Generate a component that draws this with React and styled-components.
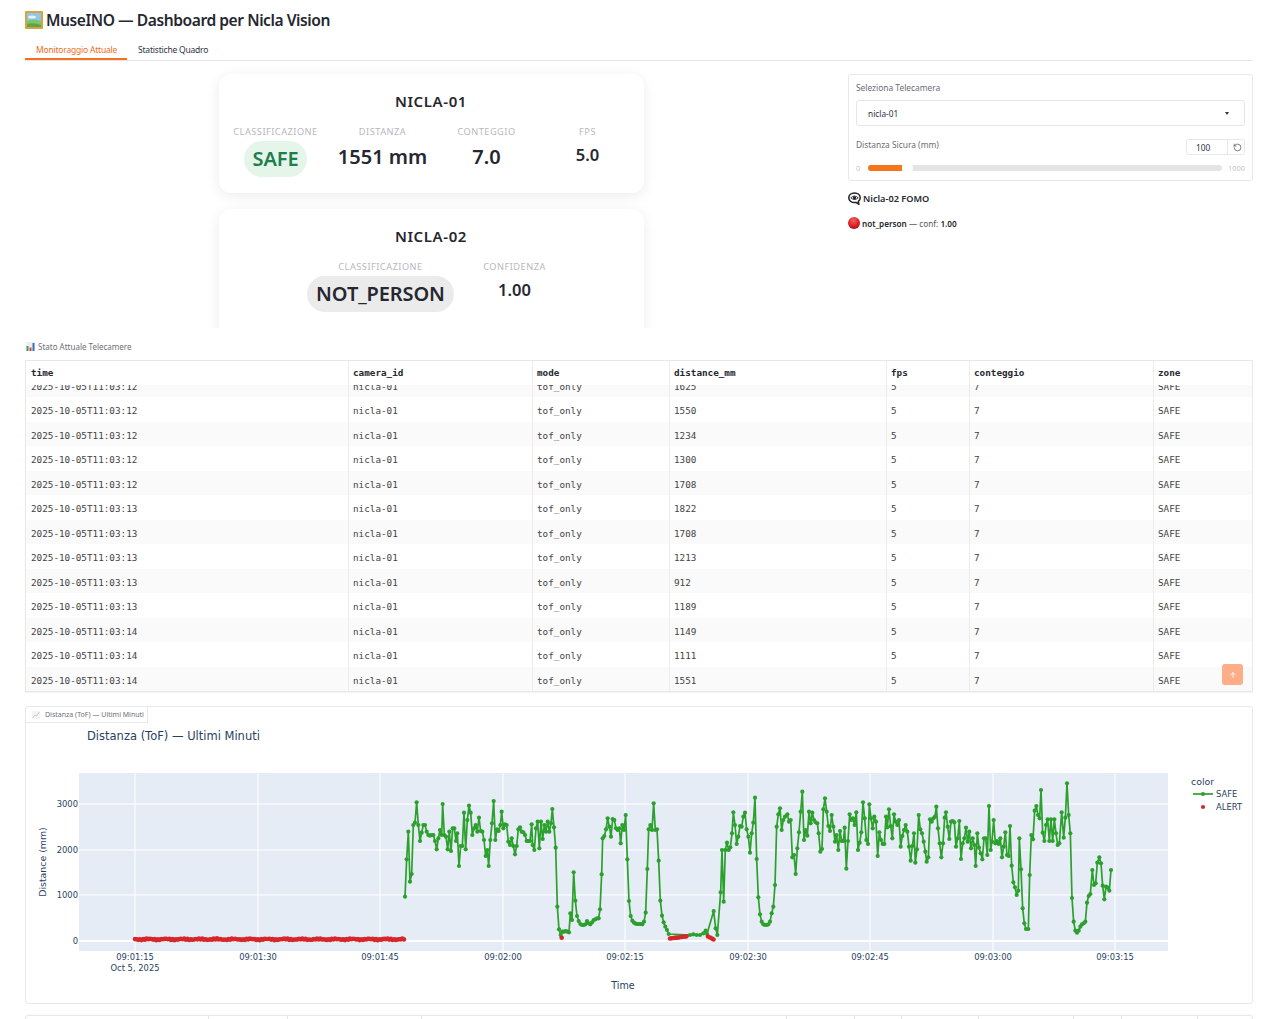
import React from 'react';
import styled, { createGlobalStyle } from 'styled-components';
import { RotateCcw, ArrowUp } from 'lucide-react';

const GlobalStyle = createGlobalStyle`
    html, body {
        margin: 0;
        height: 1019px;
        overflow: hidden;
        background: #fff;
    }
    body {
        font-family: "Noto Sans", "Open Sans", sans-serif;
        color: #31333f;
    }
`;

const Page = styled.div`
    padding: 0 27px 0 25px;
`;

const Title = styled.h1`
    display: flex;
    align-items: center;
    gap: 3px;
    margin: 0;
    height: 40px;
    font-size: 15.6px;
    font-weight: 600;
    letter-spacing: -0.45px;
    color: #262730;
`;

const Tabs = styled.div`
    display: flex;
    height: 20px;
    border-bottom: 1px solid #e6e6e6;
    box-sizing: content-box;
`;

const Tab = styled.div`
    width: ${props => props.width}px;
    height: 20px;
    box-sizing: border-box;
    padding-left: 11px;
    font-size: 8.5px;
    letter-spacing: -0.2px;
    line-height: 19px;
    white-space: nowrap;
    color: ${props => (props.active ? '#f26b21' : '#31333f')};
    border-bottom: ${props => (props.active ? '2px solid #f37021' : 'none')};
`;

const Main = styled.div`
    display: grid;
    grid-template-columns: 812px 405px;
    column-gap: 11px;
    height: 269px;
    margin-top: -2px;
`;

const Left = styled.div`
    display: flex;
    flex-direction: column;
    gap: 16px;
    align-items: center;
    padding-top: 15px;
    overflow: hidden;
`;

const Card = styled.div`
    flex: none;
    width: 425px;
    height: ${props => (props.tall ? 136 : 119)}px;
    box-sizing: border-box;
    padding: 14px 0 0 ${props => props.inset}px;
    border-radius: 12px;
    background: #fff;
    box-shadow: 0 3px 14px rgba(0, 0, 0, 0.08);
`;

const CardTitle = styled.div`
    margin-left: ${props => -props.inset}px;
    height: 26px;
    margin-bottom: 11px;
    text-align: center;
    font-size: 15px;
    line-height: 26px;
    font-weight: 600;
    letter-spacing: 0.6px;
    color: #262730;
`;

const Metrics = styled.div`
    display: grid;
    grid-template-columns: ${props => props.cols};
`;

const Metric = styled.div`
    display: flex;
    flex-direction: column;
    align-items: center;
`;

const MetricLabel = styled.div`
    height: 14px;
    margin-bottom: 2px;
    font-size: 9.2px;
    line-height: 14px;
    letter-spacing: 0.5px;
    white-space: nowrap;
    color: #b8b8bd;
`;

const Pill = styled.div`
    height: 36px;
    padding: 0 ${props => props.pad}px;
    border-radius: 18px;
    background: ${props => props.bg};
    color: ${props => props.color};
    font-size: 20px;
    line-height: 36px;
    font-weight: 600;
    white-space: nowrap;
    letter-spacing: -0.1px;
`;

const BigValue = styled.div`
    font-size: 20px;
    line-height: 32px;
    font-weight: 600;
    white-space: nowrap;
    color: #262730;
`;

const SmallValue = styled.div`
    font-size: 16.5px;
    line-height: 28px;
    font-weight: 600;
    color: #262730;
`;

const Right = styled.div`
    padding-top: 15px;
`;

const Panel = styled.div`
    padding: 7px 7px 6px;
    border: 1px solid #e8e8e8;
    border-radius: 3px;
`;

const FieldLabel = styled.div`
    height: 12px;
    font-size: 8.4px;
    line-height: 12px;
    color: #6b6d76;
`;

const Select = styled.div`
    display: flex;
    align-items: center;
    justify-content: space-between;
    height: 26px;
    box-sizing: border-box;
    margin: 6px 0 13px;
    padding: 0 15px 0 11px;
    border: 1px solid #e6e6e6;
    border-radius: 3px;
    font-size: 8.3px;
    color: #31333f;
`;

const Caret = styled.span`
    width: 0;
    height: 0;
    border-left: 2.5px solid transparent;
    border-right: 2.5px solid transparent;
    border-top: 3px solid #31333f;
`;

const ThresholdRow = styled.div`
    display: flex;
    align-items: flex-start;
    justify-content: space-between;
    height: 16px;
    margin-bottom: 7px;
`;

const NumberBox = styled.div`
    display: grid;
    grid-template-columns: 40px 19px;
    width: 59px;
    height: 16px;
    box-sizing: border-box;
    border: 1px solid #e8e8e8;
    border-radius: 3px;
    font-size: 8.3px;
    line-height: 15px;
    color: #31333f;

    > span:first-child {
        padding-left: 9px;
    }
    > span:last-child {
        display: flex;
        align-items: center;
        justify-content: center;
        border-left: 1px solid #e8e8e8;
    }
`;

const SliderRow = styled.div`
    display: flex;
    align-items: center;
    height: 12px;
    font-size: 7.4px;
    color: #c4c4c8;
    justify-content: space-between;
`;

const Track = styled.div`
    position: relative;
    width: 354px;
    height: 6px;
    margin-left: 2px;
    border-radius: 3px;
    background: #e4e4e4;
`;

const TrackFill = styled.div`
    height: 6px;
    border-radius: 3px 0 0 3px;
    background: #f5761a;
`;

const Thumb = styled.div`
    position: absolute;
    top: -3px;
    width: 11px;
    height: 12px;
    border-radius: 50%;
    background: #fff;
`;

const FomoHead = styled.div`
    display: flex;
    align-items: center;
    gap: 2px;
    height: 14px;
    margin-top: 10px;
    font-size: 9.2px;
    font-weight: 600;
    color: #262730;
`;

const FomoLine = styled.div`
    display: flex;
    align-items: center;
    gap: 2px;
    height: 14px;
    margin-top: 11px;
    font-size: 8.2px;
    color: #555;
    white-space: pre;

    b {
        font-weight: 600;
        color: #262730;
    }
`;

const Caption = styled.div`
    display: flex;
    align-items: center;
    gap: 3px;
    height: 12px;
    margin: 12px 0 8px 1px;
    font-size: 8px;
    color: #6f7078;
`;

const columns = '323px 184px 137px 217px 83px 184px 1fr';

const Table = styled.div`
    position: relative;
    height: 332px;
    box-sizing: border-box;
    border: 1px solid #e8e8e8;
    box-shadow: 0 1px 1px rgba(0, 0, 0, 0.04);
    font-family: "DejaVu Sans Mono", "Liberation Mono", monospace;
    font-size: 9.3px;
    color: #444;
`;

const HeadRow = styled.div`
    display: grid;
    grid-template-columns: ${columns};
    height: 24px;
    line-height: 24px;
    font-weight: 700;
    color: #262730;
`;

const TableBody = styled.div`
    display: flex;
    flex-direction: column;
    justify-content: flex-end;
    height: 306px;
    overflow: hidden;
`;

const Row = styled.div`
    flex: none;
    display: grid;
    grid-template-columns: ${columns};
    height: 24.5px;
    line-height: 27px;
    background: ${props => (props.shaded ? '#fafafa' : '#fff')};
`;

const Cell = styled.div`
    padding-left: 5px;
    margin-left: -1px;
    border-right: 1px solid #ececec;
    white-space: nowrap;

    &:first-child {
        margin-left: 0;
    }
    &:last-child {
        border-right: none;
    }
`;

const ScrollTop = styled.div`
    position: absolute;
    right: 9px;
    bottom: 6px;
    display: flex;
    align-items: center;
    justify-content: center;
    width: 21px;
    height: 21px;
    border-radius: 3px;
    background: #ffad88;
    color: #fff;
`;

const ChartBox = styled.div`
    height: 298px;
    box-sizing: border-box;
    margin-top: 14px;
    border: 1px solid #e8e8e8;
    border-radius: 3px;
`;

const ChartTab = styled.div`
    display: flex;
    align-items: center;
    gap: 5px;
    width: 122px;
    height: 16px;
    box-sizing: border-box;
    padding-left: 6px;
    border-right: 1px solid #e8e8e8;
    border-bottom: 1px solid #e8e8e8;
    font-size: 7px;
    white-space: nowrap;
    color: #6f7078;
`;

const ChartSvg = styled.svg`
    display: block;
    font-family: "DejaVu Sans", sans-serif;
    fill: #2a3f5f;
`;

const NextTable = styled.div`
    display: grid;
    grid-template-columns: 183px 79px 134px 365px 68px 47px 77px 95px 48px 76px 1fr;
    height: 40px;
    margin-top: 11px;
    border: 1px solid #e8e8e8;
    border-radius: 3px 3px 0 0;
    box-shadow: 0 -1px 2px rgba(0, 0, 0, 0.03);

    > div {
        border-right: 1px solid #e4e4e4;
    }
    > div:last-child {
        border-right: none;
    }
`;

const PictureIcon = () => (
    <svg width="18" height="18" viewBox="0 0 18 18">
        <rect width="18" height="18" rx="1" fill="#d8a33f" />
        <rect x="2" y="2" width="14" height="14" fill="#8fc7ea" />
        <ellipse cx="7" cy="6" rx="4" ry="1.6" fill="#e6f3f6" />
        <path d="M2 10 Q8 7 16 10 V16 H2 Z" fill="#7cc36a" />
        <path d="M2 13 Q9 11 16 14 V16 H2 Z" fill="#5aa648" />
    </svg>
);

const BarsIcon = () => (
    <svg width="9" height="9" viewBox="0 0 9 9">
        <rect width="9" height="9" fill="#eef0f2" />
        <rect x="0.5" y="4" width="2" height="5" fill="#3ea04a" />
        <rect x="3.5" y="5.5" width="2" height="3.5" fill="#d2443c" />
        <rect x="6.5" y="1" width="2" height="8" fill="#2f74c0" />
    </svg>
);

const EyeBubbleIcon = () => (
    <svg width="13" height="13" viewBox="0 0 13 13">
        <path d="M6.5 1 C9.8 1 12.2 3 12.2 5.8 C12.2 7.4 11.4 8.6 10.4 9.4 L10.8 12.2 L7.9 10.4 C7.4 10.5 7 10.6 6.5 10.6 C3.2 10.6 0.8 8.6 0.8 5.8 C0.8 3 3.2 1 6.5 1 Z" fill="#fff" stroke="#1f1f24" strokeWidth="1.5" />
        <path d="M2.8 5.8 Q6.5 2.4 10.2 5.8 Q6.5 9.2 2.8 5.8 Z" fill="#fff" stroke="#1f1f24" strokeWidth="0.9" />
        <circle cx="6.5" cy="5.8" r="1.6" fill="#1f1f24" />
    </svg>
);

const RedDotIcon = () => (
    <svg width="12" height="12" viewBox="0 0 12 12">
        <defs>
            <radialGradient id="reddot" cx="45%" cy="30%" r="70%">
                <stop offset="0" stopColor="#f4605c" />
                <stop offset="0.7" stopColor="#d81e26" />
                <stop offset="1" stopColor="#a5121b" />
            </radialGradient>
        </defs>
        <circle cx="6" cy="6" r="6" fill="url(#reddot)" />
    </svg>
);

const TrendIcon = () => (
    <svg width="8" height="8" viewBox="0 0 8 8">
        <rect width="8" height="8" fill="#f3f4f5" />
        <path d="M0.5 7 L3 4 L4.5 5 L7.5 1" fill="none" stroke="#c9b9b9" strokeWidth="0.8" />
    </svg>
);

const times = [12, 12, 12, 12, 12, 13, 13, 13, 13, 13, 14, 14, 14];
const distances = [1625, 1550, 1234, 1300, 1708, 1822, 1708, 1213, 912, 1189, 1149, 1111, 1551];
const headers = ['time', 'camera_id', 'mode', 'distance_mm', 'fps', 'conteggio', 'zone'];

// traced from the plot, x and y at 3x starting at (400,770)
const safeA = `15,380 20,268 25,185 30,335 35,312 40,165 45,158 50,97 55,165 60,213 65,188 70,165 75,165 80,185 85,195 90,197 95,195 100,195 105,213 110,238 115,205 120,180 125,195 128,102 133,195 138,200 143,238 148,185 153,243 158,175 163,175 168,213 172,190 177,288 182,228 187,228 192,128 197,238 202,150 207,107 212,128 217,195 222,175 227,165 232,185 237,143 242,183 247,185 252,210 257,258 262,240 266,288 271,210 276,160 281,93 286,210 291,178 296,183 301,165 305,125 310,175 315,163 320,165 325,215 330,225 335,205 340,228 345,253 350,228 355,178 360,172 365,185 370,187 375,195 380,213 385,213 390,213 395,163 398,225 403,240 408,175 413,155 418,235 423,155 428,207 433,165 438,185 443,155 448,185 453,160 457,117 462,172 467,233 472,410 477,478 482,495 487,485 492,485 497,483 502,485 507,487 511,430 516,450 521,307 526,392 531,438 536,453 541,462 546,465 551,465 556,463 561,453 566,460 571,463 576,457 581,450 586,448 591,445 596,445 600,418 605,313 608,205 613,198 618,178 623,145 628,170 633,200 638,147 643,150 648,175 653,180 658,175 662,220 667,165 672,180 677,135 682,268 687,393 692,438 697,452 702,458 707,461 712,462 717,462 722,462 727,463 732,455 737,428 742,297 746,178 751,165 756,180 761,100 766,180 771,178 776,272 781,392 786,437 791,457 796,470 801,480 806,492 870,495 880,493 890,495 900,495 910,490 917,482 921,492 941,423 947,475 952,495 962,367 966,240 971,395 976,240 981,218 986,240 991,232 996,190 1000,127 1005,165 1010,222 1015,200 1020,168 1025,170 1030,140 1035,128 1040,178 1045,200 1050,248 1055,190 1060,158 1065,83 1070,267 1075,382 1080,433 1085,455 1090,463 1095,465 1100,465 1105,463 1110,455 1115,430 1120,410 1125,345 1130,170 1135,133`;

// same trace, continuing at 3x from (780,770)
const safeB = `0,115 5,180 10,150 15,140 22,133 27,155 32,150 37,262 42,255 47,312 52,235 57,187 62,125 67,65 72,210 77,180 82,197 87,125 92,160 97,128 102,150 107,157 112,160 116,190 121,245 126,237 130,118 135,85 140,125 145,168 150,183 155,135 160,170 165,215 170,195 175,240 180,183 185,213 190,213 194,173 199,296 204,213 209,133 214,150 219,145 224,165 229,127 234,240 239,218 244,187 249,97 254,145 259,210 264,222 268,103 273,145 278,175 283,140 288,155 293,258 298,187 303,210 308,222 313,222 318,140 322,172 327,118 332,168 337,205 342,133 347,155 352,165 357,150 362,230 367,198 372,180 377,165 382,185 387,230 392,272 397,228 402,190 406,278 411,238 416,135 421,178 426,190 431,215 436,245 440,275 445,262 450,148 455,155 460,145 465,140 469,110 474,175 479,220 484,262 489,220 494,143 498,127 503,170 508,207 513,155 518,153 523,157 528,230 533,205 538,153 543,267 548,220 553,205 558,173 563,215 568,185 573,235 578,205 583,225 587,288 592,190 597,233 602,250 607,268 612,205 617,205 622,255 627,108 632,240 636,215 641,150 646,220 651,213 656,222 661,205 666,262 671,230 676,187 681,255 686,258 690,168 695,287 700,337 705,352 710,375 715,362 718,205 723,298 728,415 733,460 738,477 745,477 749,315 754,195 759,208 764,122 769,108 774,135 779,145 783,60 788,188 793,213 798,165 803,148 808,213 813,148 818,213 823,148 828,190 833,225 838,220 845,127 851,203 856,143 861,40 866,135 871,190 876,384 881,455 886,482 891,488 896,482 901,470 906,463 911,460 916,455 921,398 926,378 931,372 937,300 942,345 947,340 952,278 958,262 963,280 968,347 973,388 978,350 983,353 988,362 993,300`;

const parse = (text, ox) => text.split(' ').map(pair => {
    const [x, y] = pair.split(',').map(Number);
    return [ox + x / 3, 770 + y / 3];
});

const safePoints = [...parse(safeA, 400), ...parse(safeB, 780)];

const alertPoints = [];
for (let x = 135; x <= 405; x += 1.64) {
    alertPoints.push([x, 939.3 + Math.sin(x * 1.7) * 0.5 + Math.sin(x * 0.37) * 0.4]);
}
alertPoints.push([561.7, 937.7]);
for (let x = 670; x <= 688; x += 1.64) {
    alertPoints.push([x, 938.5 - (x - 670) * 0.13]);
}
[[708, 936.5], [710, 937.5], [712, 938.5], [713.5, 939.5]].forEach(p => alertPoints.push(p));

const xTicks = [
    [135, '09:01:15'], [258, '09:01:30'], [380, '09:01:45'], [503, '09:02:00'], [625, '09:02:15'],
    [748, '09:02:30'], [870, '09:02:45'], [993, '09:03:00'], [1115, '09:03:15'],
];
const yTicks = [[941, '0'], [895, '1000'], [850, '2000'], [804, '3000']];

const Chart = () => (
    <ChartSvg width="1226" height="280" viewBox="26 723 1226 280">
        <text x="87" y="739.5" fontSize="11.5">Distanza (ToF) — Ultimi Minuti</text>
        <rect x="79" y="773" width="1089" height="178" fill="#e5ecf6" />
        {xTicks.map(([x]) => <line key={x} x1={x} x2={x} y1="773" y2="951" stroke="#fff" strokeWidth="1" />)}
        {yTicks.map(([y]) => <line key={y} x1="79" x2="1168" y1={y} y2={y} stroke="#fff" strokeWidth={y === 941 ? 2 : 1} />)}
        {xTicks.map(([x, label]) => <text key={x} x={x} y="960" fontSize="8.4" textAnchor="middle">{label}</text>)}
        <text x="135" y="971" fontSize="8.4" textAnchor="middle">Oct 5, 2025</text>
        {yTicks.map(([y, label]) => <text key={y} x="78" y={y + 3} fontSize="8.4" textAnchor="end">{label}</text>)}
        <text x="623" y="989" fontSize="9.6" textAnchor="middle">Time</text>
        <text transform="translate(46 862) rotate(-90)" fontSize="9.4" textAnchor="middle">Distance (mm)</text>
        <polyline
            points={safePoints.map(p => p.join(',')).join(' ')}
            fill="none"
            stroke="#2ca02c"
            strokeWidth="1.7"
            strokeLinejoin="round"
        />
        {safePoints.map(([x, y], i) => <circle key={i} cx={x} cy={y} r="2.1" fill="#2ca02c" />)}
        {alertPoints.map(([x, y], i) => <circle key={i} cx={x} cy={y} r="2.3" fill="#d62728" />)}
        <text x="1191" y="784.5" fontSize="9.4">color</text>
        <line x1="1193" x2="1213" y1="794" y2="794" stroke="#2ca02c" strokeWidth="1.7" />
        <circle cx="1203" cy="794" r="2.1" fill="#2ca02c" />
        <text x="1216" y="797" fontSize="8.4">SAFE</text>
        <circle cx="1203" cy="807" r="2.1" fill="#d62728" />
        <text x="1216" y="810" fontSize="8.4">ALERT</text>
    </ChartSvg>
);

const App = () => {
    return (
        <Page>
            <GlobalStyle />
            <Title><PictureIcon />MuseINO — Dashboard per Nicla Vision</Title>
            <Tabs>
                <Tab active width={102}>Monitoraggio Attuale</Tab>
                <Tab width={100}>Statistiche Quadro</Tab>
            </Tabs>
            <Main>
                <Left>
                    <Card inset={3}>
                        <CardTitle inset={3}>NICLA-01</CardTitle>
                        <Metrics cols="108px 106px 102px 100px">
                            <Metric>
                                <MetricLabel>CLASSIFICAZIONE</MetricLabel>
                                <Pill bg="#e6f5ea" color="#1e7e4e" pad={9}>SAFE</Pill>
                            </Metric>
                            <Metric>
                                <MetricLabel>DISTANZA</MetricLabel>
                                <BigValue>1551 mm</BigValue>
                            </Metric>
                            <Metric>
                                <MetricLabel>CONTEGGIO</MetricLabel>
                                <BigValue>7.0</BigValue>
                            </Metric>
                            <Metric>
                                <MetricLabel>FPS</MetricLabel>
                                <SmallValue>5.0</SmallValue>
                            </Metric>
                        </Metrics>
                    </Card>
                    <Card tall inset={86}>
                        <CardTitle inset={86}>NICLA-02</CardTitle>
                        <Metrics cols="152px 116px">
                            <Metric>
                                <MetricLabel>CLASSIFICAZIONE</MetricLabel>
                                <Pill bg="#ebebeb" color="#262730" pad={9.5}>NOT_PERSON</Pill>
                            </Metric>
                            <Metric>
                                <MetricLabel>CONFIDENZA</MetricLabel>
                                <SmallValue>1.00</SmallValue>
                            </Metric>
                        </Metrics>
                    </Card>
                </Left>
                <Right>
                    <Panel>
                        <FieldLabel>Seleziona Telecamera</FieldLabel>
                        <Select>nicla-01<Caret /></Select>
                        <ThresholdRow>
                            <FieldLabel>Distanza Sicura (mm)</FieldLabel>
                            <NumberBox>
                                <span>100</span>
                                <span><RotateCcw size={9} strokeWidth={1.8} color="#444" /></span>
                            </NumberBox>
                        </ThresholdRow>
                        <SliderRow>
                            <span>0</span>
                            <Track>
                                <TrackFill style={{ width: 34 }} />
                                <Thumb style={{ left: 34 }} />
                            </Track>
                            <span>1000</span>
                        </SliderRow>
                    </Panel>
                    <FomoHead><EyeBubbleIcon />Nicla-02 FOMO</FomoHead>
                    <FomoLine><RedDotIcon /><span><b>not_person</b> — conf: <b>1.00</b></span></FomoLine>
                </Right>
            </Main>
            <Caption><BarsIcon />Stato Attuale Telecamere</Caption>
            <Table>
                <HeadRow>
                    {headers.map(h => <Cell key={h}>{h}</Cell>)}
                </HeadRow>
                <TableBody>
                    {distances.map((d, i) => (
                        <Row key={i} shaded={i % 2 === 0}>
                            <Cell>2025-10-05T11:03:{times[i]}</Cell>
                            <Cell>nicla-01</Cell>
                            <Cell>tof_only</Cell>
                            <Cell>{d}</Cell>
                            <Cell>5</Cell>
                            <Cell>7</Cell>
                            <Cell>SAFE</Cell>
                        </Row>
                    ))}
                </TableBody>
                <ScrollTop><ArrowUp size={8} strokeWidth={2.5} /></ScrollTop>
            </Table>
            <ChartBox>
                <ChartTab><TrendIcon />Distanza (ToF) — Ultimi Minuti</ChartTab>
                <Chart />
            </ChartBox>
            <NextTable>
                {Array.from({ length: 11 }, (_, i) => <div key={i} />)}
            </NextTable>
        </Page>
    );
};

export default App;
